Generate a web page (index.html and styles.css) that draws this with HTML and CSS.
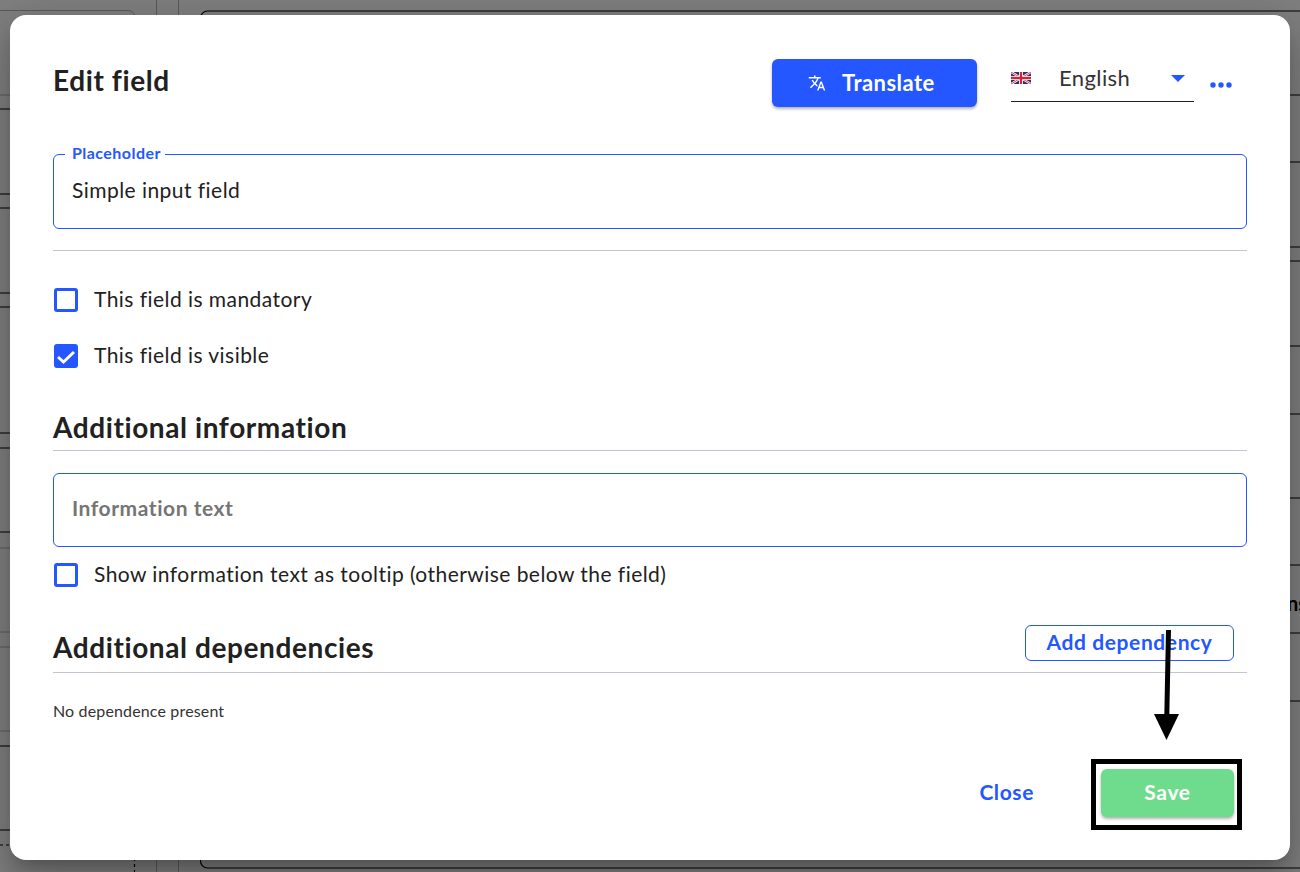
FILE: index.html
```html
<!DOCTYPE html>
<html lang="en">
<head>
<meta charset="utf-8">
<title>Edit field</title>
<link rel="stylesheet" href="styles.css">
</head>
<body>
<svg class="backdrop-page" width="1300" height="872" viewBox="0 0 1300 872" aria-hidden="true">
  <g class="line-soft">
    <path d="M0 95H200M0 632H200M0 647H200M0 731H200M0 548H200"/>
    <path d="M156.500 0V872M178.500 0V872"/>
    <path d="M0 10.500H128a7 7 0 0 1 7 7V24"/>
  </g>
  <g class="line-dark">
    <path d="M0 109H200M0 194H200M0 208H200M0 293H200M0 307H200M0 433H200M0 448H200M0 532H200M0 746H200M0 830H200"/>
    <path d="M1280 95H1300M1280 162H1300M1280 247H1300M1280 261H1300M1280 346H1300M1280 414H1300M1280 498H1300M1280 565H1300M1280 633H1300M1280 701H1300"/>
    <path d="M200.500 24V18a7 7 0 0 1 7-7H1300"/>
    <path d="M200.500 856V861a7 7 0 0 0 7 7H1300"/>
    <path class="line-dotted" d="M0 845H30M134.500 858V872"/>
  </g>
  <text class="backdrop-text" x="1287" y="611">ns</text>
</svg>
<div class="overlay">
  <section class="dialog">
    <header class="dialog-head">
      <h1 class="dialog-title">Edit field</h1>
      <button class="btn-translate" type="button">
        <svg class="icon-translate" viewBox="0 0 24 24" width="18" height="18"><path d="M12.870 15.070l-2.540-2.510.03-.03c1.740-1.940 2.980-4.170 3.710-6.530H17V4h-7V2H8v2H1v1.990h11.170C11.500 7.920 10.440 9.750 9 11.350 8.070 10.320 7.300 9.190 6.690 8h-2c.73 1.630 1.730 3.170 2.980 4.560l-5.090 5.020L4 19l5-5 3.110 3.110.76-2.040zM18.500 10h-2L12 22h2l1.120-3h4.750L21 22h2l-4.500-12zm-2.620 7l1.620-4.330L19.120 17h-3.240z"/></svg>
        <span class="btn-translate-label">Translate</span>
      </button>
      <div class="lang-select">
        <svg class="flag" viewBox="0 0 60 36" width="20" height="12">
          <rect width="60" height="36" fill="#2b2f73"/>
          <path d="M0 0L60 36M60 0L0 36" stroke="#fff" stroke-width="7"/>
          <path d="M0 0L60 36M60 0L0 36" stroke="#c8283c" stroke-width="2.500"/>
          <path d="M30 0V36M0 18H60" stroke="#fff" stroke-width="12"/>
          <path d="M30 0V36M0 18H60" stroke="#c8283c" stroke-width="7"/>
        </svg>
        <span class="lang-name">English</span>
        <svg class="caret" viewBox="0 0 14 7" width="14" height="7"><path d="M0 0H14L7 7Z"/></svg>
      </div>
      <svg class="dots" viewBox="0 0 22 6" width="22" height="6"><circle cx="3" cy="3" r="2.700"/><circle cx="11" cy="3" r="2.700"/><circle cx="19" cy="3" r="2.700"/></svg>
    </header>

    <div class="field">
      <span class="field-legend">Placeholder</span>
      <span class="field-value">Simple input field</span>
    </div>
    <hr class="rule">

    <div class="check-row">
      <span class="check"></span>
      <span class="check-label">This field is mandatory</span>
    </div>
    <div class="check-row">
      <span class="check check-on"><svg viewBox="0 0 18 18" width="18" height="18"><path d="M1 10L6.500 15L17 5" fill="none" stroke="#fff" stroke-width="3"/></svg></span>
      <span class="check-label">This field is visible</span>
    </div>

    <h2 class="section-title section-info">Additional information</h2>
    <div class="field field-info">
      <span class="field-placeholder">Information text</span>
    </div>
    <div class="check-row check-row-tip">
      <span class="check"></span>
      <span class="check-label">Show information text as tooltip (otherwise below the field)</span>
    </div>

    <div class="section-head">
      <h2 class="section-title section-deps">Additional dependencies</h2>
      <button class="btn-add" type="button">Add dependency</button>
    </div>
    <p class="empty-note">No dependence present</p>

    <footer class="dialog-foot">
      <button class="btn-close" type="button">Close</button>
      <button class="btn-save" type="button">Save</button>
    </footer>

    <span class="mark-box"></span>
    <svg class="mark-arrow" viewBox="0 0 40 112" width="40" height="112"><path d="M20.500 0L18.800 86" fill="none" stroke="#000" stroke-width="5"/><path d="M6 84H31L18.500 110Z" fill="#000"/></svg>
  </section>
</div>
</body>
</html>
```
FILE: styles.css
```css
* { box-sizing: border-box; }
html, body { margin: 0; height: 100%; }
body {
  width: 1300px;
  height: 872px;
  overflow: hidden;
  background: #fff;
  font-family: "Lato", "Noto Sans", sans-serif;
  color: #212121;
  position: relative;
}
.backdrop-page { position: absolute; inset: 0; }
.line-soft path { fill: none; stroke: #b4b4b4; stroke-width: 1; }
.line-dark path { fill: none; stroke: #000; stroke-width: 1.200; }
.line-dark .line-dotted { stroke-dasharray: 3 3; }
.backdrop-text { font: 700 20px "Lato", sans-serif; fill: #000; }

.overlay {
  position: absolute;
  inset: 0;
  background: rgba(0, 0, 0, .5);
  padding: 15px 10px 12px;
}
.dialog {
  position: relative;
  display: flex;
  flex-direction: column;
  height: 845px;
  padding: 44px 43px 43px;
  background: #fff;
  border-radius: 16px;
  box-shadow: 0 11px 15px -7px rgba(0,0,0,.2), 0 24px 38px 3px rgba(0,0,0,.14), 0 9px 46px 8px rgba(0,0,0,.12);
}

.dialog-head { display: flex; align-items: flex-start; height: 48px; margin-bottom: 47px; padding-right: 15px; }
.dialog-title { margin: 4px auto 0 0; font-size: 28px; line-height: 34px; font-weight: 700; letter-spacing: .6px; }
.btn-translate {
  display: flex;
  align-items: center;
  gap: 16px;
  width: 205px;
  height: 48px;
  padding: 0 0 0 36px;
  border: 0;
  border-radius: 6px;
  background: #2457ff;
  color: #fff;
  font: 700 22px "Lato", sans-serif;
  letter-spacing: .45px;
  box-shadow: 0 2px 3px rgba(0,0,0,.3);
}
.btn-translate-label { padding-bottom: 2px; }
.icon-translate { fill: #fff; }
.lang-select {
  display: flex;
  align-items: center;
  width: 183px;
  height: 43px;
  margin-left: 34px;
  padding-bottom: 4px;
  border-bottom: 1px solid #212121;
}
.lang-name { margin-left: 28px; padding-bottom: 2px; font-size: 22px; letter-spacing: .4px; color: #333; }
.caret { margin-left: auto; margin-right: 9px; fill: #2457ff; }
.dots { margin: 23px 0 0 16px; fill: #2457ff; }

.field {
  position: relative;
  display: flex;
  align-items: center;
  height: 75px;
  padding: 0 18px 5px;
  border: 1px solid #2457ff;
  border-radius: 6px;
  font-size: 21px;
  letter-spacing: .45px;
}
.field-legend {
  position: absolute;
  top: -11px;
  left: 11px;
  padding: 0 4px 0 7px;
  background: #fff;
  color: #2457ff;
  font-size: 16px;
  line-height: 18px;
  font-weight: 700;
  letter-spacing: .45px;
}
.field-info { height: 74px; margin-top: 22px; }
.field-placeholder { font-weight: 700; color: #757575; letter-spacing: .55px; }

.rule { width: 100%; height: 1px; margin: 21px 0 0; border: 0; background: #c3c6d0; }

.check-row { display: flex; align-items: center; gap: 16px; height: 56px; padding-left: 1px; font-size: 21px; letter-spacing: .45px; }
.rule + .check-row { margin-top: 21px; }
.check-label { padding-bottom: 3px; }
.check {
  display: flex;
  align-items: center;
  justify-content: center;
  width: 24px;
  height: 24px;
  border: 3px solid #2457ff;
  border-radius: 3px;
  flex: none;
}
.check-on { background: #2457ff; }
.check-row-tip { margin-top: 0; }

.section-title {
  margin: 0;
  font-size: 28px;
  line-height: 34px;
  font-weight: 700;
  letter-spacing: .6px;
}
.section-info { margin-top: 26px; padding-bottom: 6px; border-bottom: 1px solid #c3c6d0; }
.section-head {
  position: relative;
  margin-top: 27px;
  border-bottom: 1px solid #c3c6d0;
  padding-bottom: 8px;
}
.btn-add {
  position: absolute;
  right: 13px;
  top: -5px;
  width: 209px;
  height: 36px;
  padding: 0 0 4px;
  border: 1px solid #2457ff;
  border-radius: 6px;
  background: #fff;
  color: #2457ff;
  font: 700 21px "Lato", sans-serif;
  letter-spacing: .6px;
}
.empty-note { margin: 29px 0 0; font-size: 16px; line-height: 18px; letter-spacing: .15px; color: #333; }

.dialog-foot { display: flex; align-items: center; justify-content: flex-end; margin-top: auto; padding-right: 13px; }
.btn-close {
  margin-right: 67px;
  padding: 0 0 3px;
  border: 0;
  background: none;
  color: #2457ff;
  font: 700 21px "Lato", sans-serif;
  letter-spacing: .6px;
}
.btn-save {
  width: 133px;
  height: 48px;
  padding: 0 0 4px;
  border: 0;
  border-radius: 6px;
  background: #6edc8c;
  color: #fff;
  font: 700 21px "Lato", sans-serif;
  letter-spacing: .7px;
  box-shadow: 0 2px 3px rgba(0,0,0,.3);
}

.mark-box {
  position: absolute;
  left: 1081px;
  top: 744px;
  width: 151px;
  height: 71px;
  border: 5px solid #000;
  pointer-events: none;
}
.mark-arrow { position: absolute; left: 1138px; top: 615px; pointer-events: none; }
```
